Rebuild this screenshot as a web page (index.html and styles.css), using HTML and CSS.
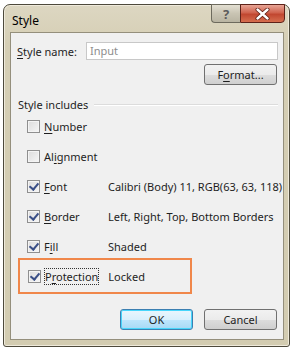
FILE: index.html
```html
<!DOCTYPE html>
<html lang="en">
<head>
    <meta charset="UTF-8">
    <title>Style</title>
    <link rel="stylesheet" href="styles.css">
</head>
<body>

    <div class="window">
        <div class="titlebar">
            <span class="title">Style</span>
            <div class="controls">
                <span class="btn-help">?</span>
                <span class="btn-close">
                    <svg width="15" height="12" viewBox="0 0 15 12">
                        <path d="M2.5 1.5 L12.5 10.5 M12.5 1.5 L2.5 10.5" stroke="#5a1a10" stroke-width="4" stroke-linecap="round"/>
                        <path d="M2.5 1.5 L12.5 10.5 M12.5 1.5 L2.5 10.5" stroke="#fff" stroke-width="2.4" stroke-linecap="round"/>
                    </svg>
                </span>
            </div>
        </div>

        <div class="client">
            <div class="name-row">
                <label><u>S</u>tyle name:</label>
                <div class="input">Input</div>
            </div>
            <div class="format-row">
                <button class="btn">F<u>o</u>rmat...</button>
            </div>

            <div class="group-title">Style includes</div>

            <div class="rows">
                <div class="row">
                    <span class="check"></span>
                    <span class="name"><u>N</u>umber</span>
                </div>
                <div class="row">
                    <span class="check"></span>
                    <span class="name">Al<u>i</u>gnment</span>
                </div>
                <div class="row">
                    <span class="check on"></span>
                    <span class="name"><u>F</u>ont</span>
                    <span class="value">Calibri (Body) 11, RGB(63, 63, 118)</span>
                </div>
                <div class="row">
                    <span class="check on"></span>
                    <span class="name"><u>B</u>order</span>
                    <span class="value">Left, Right, Top, Bottom Borders</span>
                </div>
                <div class="row">
                    <span class="check on"></span>
                    <span class="name">F<u>i</u>ll</span>
                    <span class="value">Shaded</span>
                </div>
                <div class="row highlight">
                    <span class="check on"></span>
                    <span class="name focus">P<u>r</u>otection</span>
                    <span class="value">Locked</span>
                </div>
            </div>

            <div class="buttons">
                <button class="btn default">OK</button>
                <button class="btn">Cancel</button>
            </div>
        </div>
    </div>

</body>
</html>
```

FILE: styles.css
```css
body {
    margin: 0;
    padding: 4px 3px 0 3px;
    background: #ffffff;
    font-family: "Noto Sans", "DejaVu Sans", sans-serif;
    font-size: 11px;
    color: #1e1e1e;
}
u {
    text-decoration-thickness: 1px;
    text-underline-offset: 2px;
}
.window {
    width: 285px;
    height: 341px;
    border: 1px solid #4e4a3c;
    border-radius: 7px 7px 3px 3px;
    background: linear-gradient(#ddd7c2, #d5ceb4 40px, #d3ccb1);
    box-shadow: inset 0 0 0 1px #efeadb;
    display: flex;
    flex-direction: column;
}
.titlebar {
    height: 27px;
    display: flex;
    justify-content: space-between;
    padding-left: 8px;
}
.title {
    font-size: 12px;
    color: #000;
    padding-top: 7px;
}
.controls {
    display: flex;
    height: 19px;
    margin-right: 4px;
    margin-top: -1px;
}
.btn-help {
    width: 29px;
    height: 19px;
    border: 1px solid #6d6a5d;
    border-right: none;
    border-radius: 0 0 0 4px;
    background: linear-gradient(#e3dfd2, #c9c4b3 50%, #b9b4a2);
    color: #5b5b5b;
    font-size: 13px;
    font-weight: bold;
    text-align: center;
    line-height: 18px;
    box-sizing: border-box;
}
.btn-close {
    width: 45px;
    height: 19px;
    border: 1px solid #5e2219;
    border-radius: 0 0 4px 0;
    background: linear-gradient(#e8a596, #d0634e 45%, #c14730 55%, #d66e4f);
    box-sizing: border-box;
    display: flex;
    align-items: center;
    justify-content: center;
}
.client {
    margin: 0 5px 6px 6px;
    flex: 1;
    background: #f0f0f0;
    border: 1px solid #948f7c;
    padding: 9px 5px 0 6px;
}
.name-row {
    display: flex;
    align-items: center;
    gap: 9px;
}
.input {
    flex: 1;
    height: 18px;
    border: 1px solid #c8c8c8;
    background: #fff;
    color: #8d8d8d;
    padding-left: 3px;
    line-height: 16px;
    box-sizing: border-box;
}
.format-row {
    display: flex;
    justify-content: flex-end;
    margin-top: 4px;
    padding-right: 1px;
}
.btn {
    width: 73px;
    height: 21px;
    border: 1px solid #707070;
    border-radius: 3px;
    background: linear-gradient(#f2f2f2, #ebebeb 50%, #dddddd 51%, #cfcfcf);
    font-family: inherit;
    font-size: 11px;
    color: #1e1e1e;
    padding: 0;
}
.btn.default {
    border-color: #3c7fb1;
    box-shadow: inset 0 0 0 1px #48d6fb;
    background: linear-gradient(#eaf6fd, #d9f0fc 50%, #bee6fd 51%, #a7d9f5);
}
.group-title {
    display: flex;
    align-items: center;
    gap: 6px;
    margin-top: 12px;
    margin-left: 1px;
}
.group-title::after {
    content: "";
    flex: 1;
    border-top: 1px solid #dcdcdc;
    border-bottom: 1px solid #fff;
}
.rows {
    margin-top: -1px;
}
.row {
    height: 30px;
    display: flex;
    align-items: center;
    padding-left: 10px;
    white-space: nowrap;
}
.check {
    flex: none;
    width: 13px;
    height: 13px;
    box-sizing: border-box;
    border: 1px solid #8f8f8f;
    background: linear-gradient(135deg, #dcdcdc, #f6f6f6);
    box-shadow: inset 0 0 0 1px #f4f4f4;
    margin-right: 4px;
    position: relative;
}
.check.on::after {
    content: "";
    position: absolute;
    left: 3px;
    top: 0px;
    width: 4px;
    height: 7px;
    border: solid #3a4f87;
    border-width: 0 2px 2px 0;
    transform: rotate(40deg);
}
.name {
    flex: none;
    width: 64px;
}
.name.focus {
    width: auto;
    outline: 1px dotted #333;
    outline-offset: 0;
    margin-right: 10px;
}
.highlight {
    width: 174px;
    height: 36px;
    box-sizing: border-box;
    margin-left: 1px;
    margin-top: -3px;
    padding-left: 8px;
    border: 2px solid #f0874a;
}
.buttons {
    display: flex;
    justify-content: flex-end;
    gap: 11px;
    margin-top: 15px;
    padding-right: 1px;
}
```
